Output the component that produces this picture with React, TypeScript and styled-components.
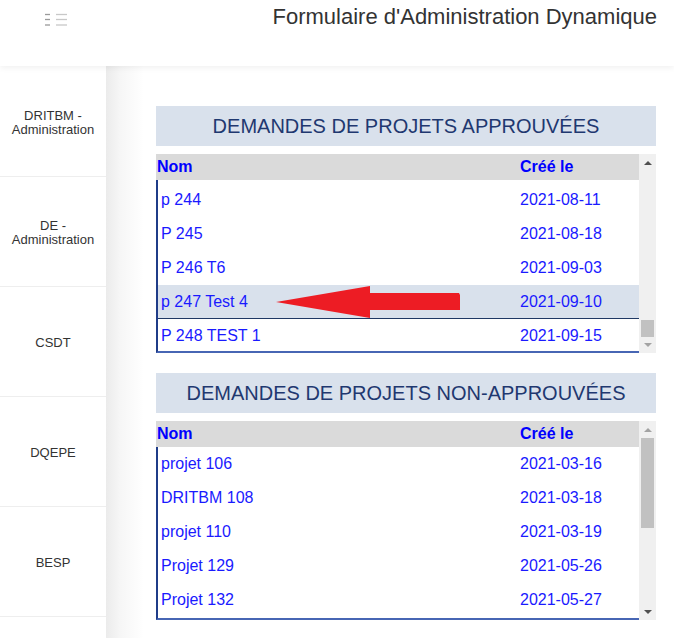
import React from "react";
import styled, { createGlobalStyle } from "styled-components";

const GlobalStyle = createGlobalStyle`
  *, *::before, *::after {
    box-sizing: border-box;
  }
  html, body {
    margin: 0;
    padding: 0;
    background: #ffffff;
    font-family: "Liberation Sans", Arial, sans-serif;
  }
`;

interface Row {
  name: string;
  date: string;
  selected?: boolean;
}

const approved: Row[] = [
  { name: "p 244", date: "2021-08-11" },
  { name: "P 245", date: "2021-08-18" },
  { name: "P 246 T6", date: "2021-09-03" },
  { name: "p 247 Test 4", date: "2021-09-10", selected: true },
  { name: "P 248 TEST 1", date: "2021-09-15" },
];

const pending: Row[] = [
  { name: "projet 106", date: "2021-03-16" },
  { name: "DRITBM 108", date: "2021-03-18" },
  { name: "projet 110", date: "2021-03-19" },
  { name: "Projet 129", date: "2021-05-26" },
  { name: "Projet 132", date: "2021-05-27" },
];

const menu = ["DRITBM - Administration", "DE - Administration", "CSDT", "DQEPE", "BESP", ""];

function ListIcon() {
  return (
    <svg width="24" height="14" viewBox="0 0 24 14">
      <g strokeWidth="1.3">
        <line x1="1" y1="1.5" x2="6" y2="1.5" stroke="#9a9a9a" />
        <line x1="1" y1="6.5" x2="6" y2="6.5" stroke="#9a9a9a" />
        <line x1="1" y1="12" x2="6" y2="12" stroke="#9a9a9a" />
        <line x1="12" y1="1.5" x2="23" y2="1.5" stroke="#c8c8c8" />
        <line x1="12" y1="6.5" x2="23" y2="6.5" stroke="#c8c8c8" />
        <line x1="12" y1="12" x2="23" y2="12" stroke="#c8c8c8" />
      </g>
    </svg>
  );
}

function Arrow() {
  return (
    <ArrowSvg width="186" height="34" viewBox="0 0 186 34">
      <polygon
        points="1,17 95,1 95,8 184,8 185,10 185,25 95,25 95,33"
        fill="#ed1c24"
      />
    </ArrowSvg>
  );
}

function Scrollbar({ thumbTop, thumbHeight, upActive }: { thumbTop: number; thumbHeight: number; upActive: boolean }) {
  return (
    <Track>
      <ScrollArrow $up $active={upActive} />
      <Thumb style={{ top: thumbTop, height: thumbHeight }} />
      <ScrollArrow $active={!upActive} />
    </Track>
  );
}

function ProjectTable({ title, rows, thumbTop, thumbHeight, upActive, scrolled }: {
  title: string;
  rows: Row[];
  thumbTop: number;
  thumbHeight: number;
  upActive: boolean;
  scrolled?: boolean;
}) {
  return (
    <Section>
      <SectionTitle>{title}</SectionTitle>
      <TableWrap>
        <Table>
          <HeadRow>
            <NameCell $w={364}>Nom</NameCell>
            <DateCell>Créé le</DateCell>
          </HeadRow>
          <Body $scrolled={scrolled}>
            {rows.map((r) => (
              <BodyRow key={r.name} $selected={r.selected}>
                <NameCell $w={362}>{r.name}</NameCell>
                {r.selected && scrolled ? <Arrow /> : null}
                <DateCell>{r.date}</DateCell>
              </BodyRow>
            ))}
          </Body>
        </Table>
        <Scrollbar thumbTop={thumbTop} thumbHeight={thumbHeight} upActive={upActive} />
      </TableWrap>
    </Section>
  );
}

export default function App() {
  return (
    <>
      <GlobalStyle />
      <Page>
        <Header>
          <IconSlot>
            <ListIcon />
          </IconSlot>
          <AppTitle>Formulaire d'Administration Dynamique</AppTitle>
        </Header>
        <Layout>
          <Sidebar>
            {menu.map((m, i) => (
              <MenuItem key={i}>
                <MenuLabel>{m}</MenuLabel>
              </MenuItem>
            ))}
          </Sidebar>
          <Main>
            <ProjectTable
              title="DEMANDES DE PROJETS APPROUVÉES"
              rows={approved}
              thumbTop={166}
              thumbHeight={17}
              upActive={true}
              scrolled
            />
            <ProjectTable
              title="DEMANDES DE PROJETS NON-APPROUVÉES"
              rows={pending}
              thumbTop={17}
              thumbHeight={90}
              upActive={false}
            />
          </Main>
        </Layout>
      </Page>
    </>
  );
}

const Page = styled.div`
  width: 674px;
  height: 638px;
  overflow: hidden;
  display: flex;
  flex-direction: column;
`;

const Header = styled.header`
  height: 66px;
  flex-shrink: 0;
  display: flex;
  align-items: flex-start;
  justify-content: space-between;
  padding: 0 17px 0 44px;
  background: #fff;
  box-shadow: 0 2px 6px rgba(0, 0, 0, 0.06);
  position: relative;
  z-index: 2;
`;

const IconSlot = styled.div`
  padding-top: 13px;
`;

const AppTitle = styled.h1`
  margin: 5px 0 0;
  font-size: 22px;
  font-weight: normal;
  color: #333;
  line-height: 24px;
`;

const Layout = styled.div`
  flex: 1;
  display: flex;
  min-height: 0;
`;

const Sidebar = styled.nav`
  width: 106px;
  flex-shrink: 0;
  background: #fff;
  padding-top: 1px;
`;

const MenuItem = styled.div`
  height: 110px;
  border-bottom: 1px solid #eeeeee;
  display: flex;
  align-items: center;
  justify-content: center;
  text-align: center;
  padding: 2px 6px 0;
`;

const MenuLabel = styled.span`
  font-size: 13px;
  line-height: 14px;
  color: #333;
`;

const Main = styled.main`
  flex: 1;
  padding: 40px 18px 0 50px;
  background: linear-gradient(to right, #ebebeb 0px, #f6f6f6 14px, #ffffff 38px);
  display: flex;
  flex-direction: column;
  gap: 20px;
`;

const Section = styled.section`
  display: flex;
  flex-direction: column;
  gap: 8px;
`;

const SectionTitle = styled.h2`
  margin: 0;
  height: 40px;
  background: #d9e1ec;
  color: #1f3870;
  font-size: 20px;
  font-weight: normal;
  display: flex;
  align-items: center;
  justify-content: center;
`;

const TableWrap = styled.div`
  display: flex;
  background: #fff;
`;

const Table = styled.div`
  width: 483px;
  display: flex;
  flex-direction: column;
`;

const HeadRow = styled.div`
  height: 26px;
  background: #dadada;
  display: flex;
  align-items: center;
  font-weight: bold;
  font-size: 16px;
  color: #0000ff;
  & > div:first-child {
    padding-left: 1px;
  }
`;

const Body = styled.div<{ $scrolled?: boolean }>`
  height: 173px;
  overflow: hidden;
  padding-top: ${(p) => (p.$scrolled ? 3 : 0)}px;
  border-left: 2px solid #1f3c88;
  border-bottom: 2px solid #4766b4;
`;

const BodyRow = styled.div<{ $selected?: boolean }>`
  height: 34px;
  flex-shrink: 0;
  display: flex;
  align-items: center;
  position: relative;
  font-size: 16px;
  color: #1a1aff;
  background: ${(p) => (p.$selected ? "#d9e1ec" : "#fff")};
  border-bottom: ${(p) => (p.$selected ? "1px solid #1f3864" : "none")};
  & > div:first-child {
    padding-left: 3px;
  }
`;

const NameCell = styled.div<{ $w: number }>`
  width: ${(p) => p.$w}px;
  flex-shrink: 0;
`;

const DateCell = styled.div`
  flex: 1;
`;

const ArrowSvg = styled.svg`
  position: absolute;
  left: 117px;
  top: 0px;
`;

const Track = styled.div`
  position: relative;
  width: 17px;
  background: #f0f0f0;
  display: flex;
  flex-direction: column;
  justify-content: space-between;
`;

const ScrollArrow = styled.div<{ $up?: boolean; $active: boolean }>`
  height: 17px;
  display: flex;
  align-items: center;
  justify-content: center;
  &::after {
    content: "";
    width: 0;
    height: 0;
    border-left: 4px solid transparent;
    border-right: 4px solid transparent;
    ${(p) =>
      p.$up
        ? `border-bottom: 4px solid ${p.$active ? "#505050" : "#a3a3a3"};`
        : `border-top: 4px solid ${p.$active ? "#505050" : "#a3a3a3"};`}
  }
`;

const Thumb = styled.div`
  position: absolute;
  left: 2px;
  width: 13px;
  background: #c1c1c1;
`;
